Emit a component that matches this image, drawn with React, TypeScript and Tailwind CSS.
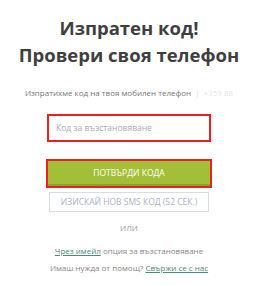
import React from 'react'

const App: React.FC = () => {
  return (
    <div className="w-[258px] h-[286px] bg-white flex flex-col items-center font-['Open_Sans',sans-serif] text-[#444]">
      <h1 className="mt-[14px] text-[18.5px] leading-[27px] font-bold text-center text-[#3f3f3f]">
        Изпратен код!
        <br />
        Провери своя телефон
      </h1>

      <p className="mt-[19px] flex items-center gap-[4px] text-[8px] text-[#777]">
        Изпратихме код на твоя мобилен телефон
        <span className="text-[#e2e2e2]">|</span>
        <span className="text-[#e2e2e2] blur-[0.6px]">+359 88</span>
      </p>

      <div className="mt-[15px] w-[164px] h-[28px] border-2 border-[#f01e1e] flex items-center px-[7px]">
        <input
          className="w-full text-[8.5px] text-[#555] placeholder:text-[#aaa] outline-none bg-transparent"
          placeholder="Код за възстановяване"
        />
      </div>

      <button className="mt-[17px] w-[166px] h-[29px] border-2 border-[#f01e1e] bg-[#a3bf37] shadow-[inset_0_-2px_0_#8aa52a] text-white text-[8.5px] uppercase">
        Потвърди кода
      </button>

      <button className="mt-[4px] w-[160px] h-[20px] border border-[#d8dce4] text-[#a9b2c6] text-[8.5px] uppercase">
        Изискай нов SMS код (52 сек.)
      </button>

      <p className="mt-[10px] text-[8px] text-[#999] uppercase">или</p>

      <p className="mt-[11px] text-[8px] text-[#888]">
        <a className="underline text-[#4d8a7e]">Чрез имейл</a> опция за възстановяване
      </p>

      <p className="mt-[5px] text-[8px] text-[#888]">
        Имаш нужда от помощ? <a className="underline text-[#4d8a7e]">Свържи се с нас</a>
      </p>
    </div>
  )
}

export default App
